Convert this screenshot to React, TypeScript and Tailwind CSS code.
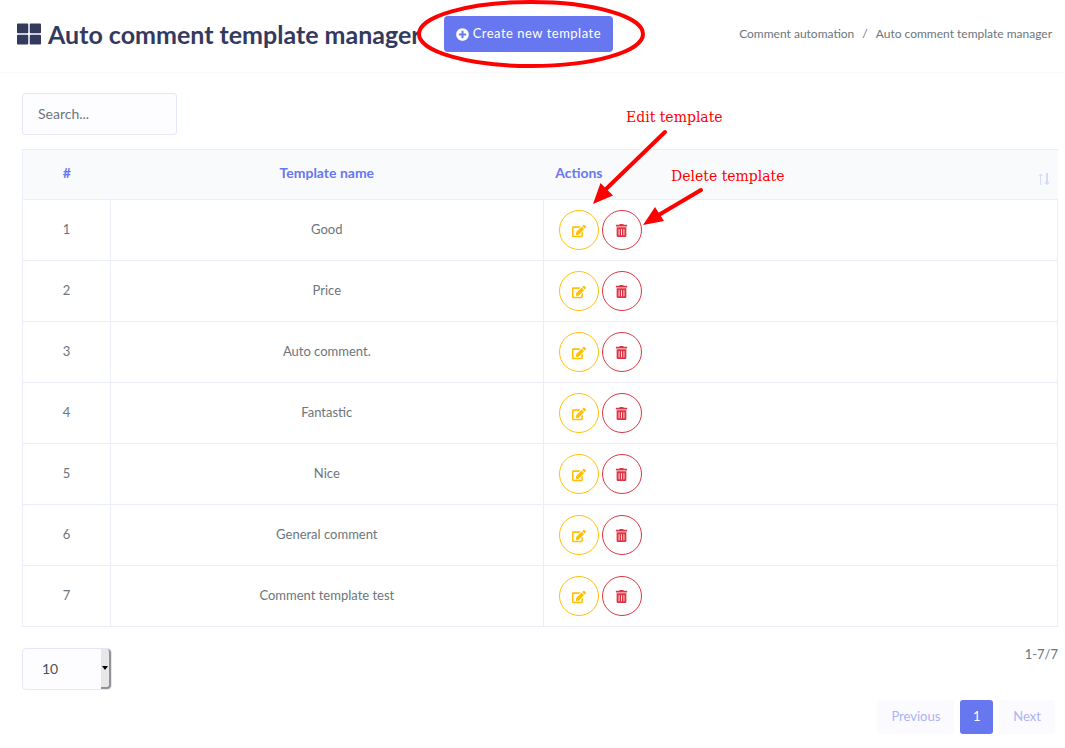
import { useState } from "react";
import { FaEdit, FaPlusCircle, FaThLarge, FaTrashAlt } from "react-icons/fa";

const templates = [
  "Good",
  "Price",
  "Auto comment.",
  "Fantastic",
  "Nice",
  "General comment",
  "Comment template test",
];

function PageHeader() {
  return (
    <header className="flex h-[73px] items-center border-b border-[#f9f9f9] pb-1 pl-[17px] pr-[13px]">
      <h1 className="flex items-center gap-[7px] whitespace-nowrap text-[25px] font-bold leading-8 text-[#34395e]">
        <FaThLarge size={24} aria-hidden="true" />
        Auto comment template manager
      </h1>
      <button
        type="button"
        className="ml-[23px] flex h-9 shrink-0 items-center gap-1 rounded bg-[#6777ef] px-3 text-[13px] tracking-[0.5px] text-white"
      >
        <FaPlusCircle size={13} aria-hidden="true" />
        Create new template
      </button>
      <nav aria-label="Breadcrumb" className="ml-auto">
        <ol className="flex gap-2 whitespace-nowrap text-xs leading-5 text-[#6c757d]">
          <li>
            <a href="#automation">Comment automation</a>
          </li>
          <li aria-hidden="true">/</li>
          <li aria-current="page">Auto comment template manager</li>
        </ol>
      </nav>
    </header>
  );
}

function TemplateTable({ rows }: { rows: { id: number; name: string }[] }) {
  return (
    <table className="mt-[14px] w-full table-fixed border-collapse text-[13px] text-[#6c757d]">
      <thead>
        <tr className="h-[50px] border border-r-0 border-[#ebedfb] bg-[#f9fafc] text-sm text-[#6777ef]">
          <th className="w-[88px] pb-[3px] font-bold">#</th>
          <th className="w-[41.8%] pb-[3px] font-bold">Template name</th>
          <th className="px-3 pb-[3px] text-left font-bold">
            <div className="-mr-1 flex items-center justify-between">
              Actions
              <svg className="mt-3" width="12" height="14" viewBox="0 0 12 14" fill="none" stroke="#d6dafa" aria-hidden="true">
                <path d="M2.500 13V2M0.500 4l2-2 2 2" />
                <path d="M9 1v10" strokeWidth="2" />
                <path d="M7 10.500l2 2 2-2z" fill="#d6dafa" />
              </svg>
            </div>
          </th>
        </tr>
      </thead>
      <tbody>
        {rows.map(({ id, name }) => (
          <tr key={id} className="h-[61px]">
            <td className="border border-[#ebedfb] text-center">{id}</td>
            <td className="border border-[#ebedfb] text-center">{name}</td>
            <td className="border border-[#ebedfb] px-[15px]">
              <div className="flex gap-[3px]">
                <button
                  type="button"
                  aria-label={`Edit ${name}`}
                  className="flex size-10 items-center justify-center rounded-full border border-[#ffc107] pt-px text-[#ffc107]"
                >
                  <FaEdit size={14} />
                </button>
                <button
                  type="button"
                  aria-label={`Delete ${name}`}
                  className="flex size-10 items-center justify-center rounded-full border border-[#dc3545] text-[#dc3545]"
                >
                  <FaTrashAlt size={13} />
                </button>
              </div>
            </td>
          </tr>
        ))}
      </tbody>
    </table>
  );
}

function Pager({ count }: { count: number }) {
  return (
    <footer className="mt-[21px] flex justify-between text-[13px]">
      <div className="relative h-[42px] w-[90px]">
        <select
          aria-label="Rows per page"
          defaultValue="10"
          className="size-full appearance-none rounded border border-[#e4e6fc] bg-[#fdfdff] pl-[19px] text-sm text-[#495057]"
        >
          <option>10</option>
          <option>25</option>
          <option>50</option>
        </select>
        <span
          aria-hidden="true"
          className="pointer-events-none absolute inset-y-px right-px flex w-[10px] items-center justify-center rounded-r-sm border-b-2 border-r-2 border-[#8f9397] bg-[#e7e7e7]"
        >
          <svg width="6" height="4" viewBox="0 0 6 4">
            <path d="M0 0h6L3 4z" fill="#000" />
          </svg>
        </span>
      </div>
      <div className="flex flex-col items-end">
        <p className="-mt-1 leading-5 text-[#6c757d]">{`1-${count}/${count}`}</p>
        <nav aria-label="Pagination" className="mr-[3px] mt-9 flex gap-[6px]">
          <button type="button" disabled className="h-[34px] rounded-[3px] bg-[#fbfbff] px-[14px] text-[#a9b3f7]">
            Previous
          </button>
          <button type="button" aria-current="page" className="h-[34px] w-[33px] rounded-[3px] bg-[#6777ef] text-white">
            1
          </button>
          <button type="button" disabled className="h-[34px] rounded-[3px] bg-[#fbfbff] px-[14px] text-[#a9b3f7]">
            Next
          </button>
        </nav>
      </div>
    </footer>
  );
}

function Annotations() {
  return (
    <div className="pointer-events-none absolute left-0 top-0 whitespace-nowrap font-['DejaVu_Serif',serif] text-sm leading-5 text-[#ff0000]">
      <svg width="800" height="240" viewBox="0 0 800 240" fill="none" stroke="#ff0000" strokeWidth="4" aria-hidden="true">
        <ellipse cx="531" cy="34" rx="112" ry="32" />
        <path d="M665 132L604 191M701 190L657 216" strokeLinecap="round" />
        <path d="M593 204L600.500 183L613 195.500zM643 225L655 207L664 221z" fill="#ff0000" stroke="none" />
      </svg>
      <span className="absolute left-[626px] top-[107px]">Edit template</span>
      <span className="absolute left-[671px] top-[166px]">Delete template</span>
    </div>
  );
}

export default function App() {
  const [query, setQuery] = useState("");
  const rows = templates
    .map((name, index) => ({ id: index + 1, name }))
    .filter(({ name }) => name.toLowerCase().includes(query.toLowerCase()));

  return (
    <div className="relative min-h-screen bg-white font-['Lato','Liberation_Sans',sans-serif]">
      <PageHeader />
      <main className="pb-3 pl-[22px] pr-[7px] pt-5">
        <input
          type="search"
          aria-label="Search templates"
          placeholder="Search..."
          value={query}
          onChange={(event) => setQuery(event.target.value)}
          className="block h-[42px] w-[155px] rounded-[3px] border border-[#e4e6fc] bg-[#fdfdff] px-[15px] pb-[2px] text-sm text-[#495057] placeholder:text-[#6c757d]"
        />
        <TemplateTable rows={rows} />
        <Pager count={templates.length} />
      </main>
      <Annotations />
    </div>
  );
}
